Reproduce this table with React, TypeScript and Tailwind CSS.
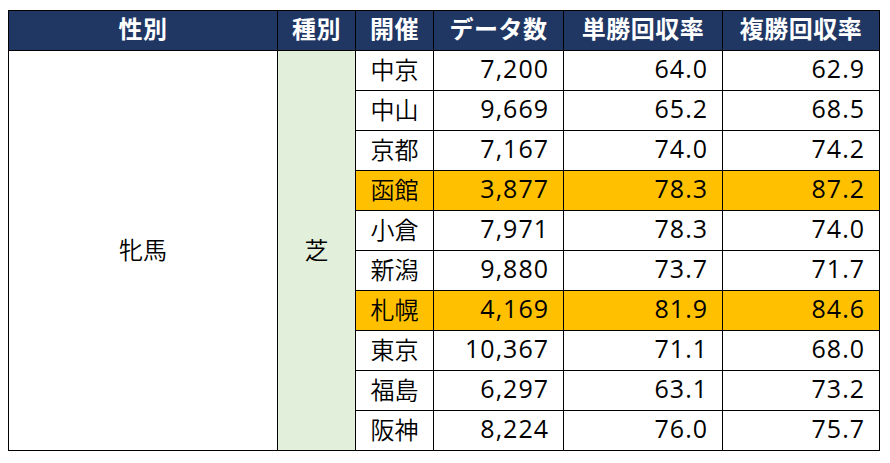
import React from "react";

const rows: { v: string; n: string; t: string; f: string; hl?: boolean }[] = [
  { v: "中京", n: "7,200", t: "64.0", f: "62.9" },
  { v: "中山", n: "9,669", t: "65.2", f: "68.5" },
  { v: "京都", n: "7,167", t: "74.0", f: "74.2" },
  { v: "函館", n: "3,877", t: "78.3", f: "87.2", hl: true },
  { v: "小倉", n: "7,971", t: "78.3", f: "74.0" },
  { v: "新潟", n: "9,880", t: "73.7", f: "71.7" },
  { v: "札幌", n: "4,169", t: "81.9", f: "84.6", hl: true },
  { v: "東京", n: "10,367", t: "71.1", f: "68.0" },
  { v: "福島", n: "6,297", t: "63.1", f: "73.2" },
  { v: "阪神", n: "8,224", t: "76.0", f: "75.7" },
];

function Num({ children, hl }: { children: React.ReactNode; hl?: boolean }) {
  return (
    <div
      className={
        hl
          ? "flex items-center justify-end bg-[#ffc000] pr-[14px] pb-[3px] text-[25px] tracking-[1px]"
          : "flex items-center justify-end bg-white pr-[14px] pb-[3px] text-[25px] tracking-[1px]"
      }
    >
      {children}
    </div>
  );
}

export default function App() {
  return (
    <div className="h-[463px] w-[890px] bg-white pt-[10px] pl-[8px]">
      <div className="grid w-[872px] grid-cols-[268px_77px_77px_129px_158px_156px] grid-rows-[39px_repeat(10,39px)] gap-px bg-black p-px font-['Open_Sans','Noto_Sans_CJK_JP',sans-serif] text-[24px] font-normal text-black">
        {["性別", "種別", "開催", "データ数", "単勝回収率", "複勝回収率"].map((h) => (
          <div
            key={h}
            className="flex items-center justify-center bg-[#203764] pb-[6px] font-['Noto_Sans_CJK_JP',sans-serif] text-[24px] font-bold tracking-[0.5px] text-white"
          >
            {h}
          </div>
        ))}
        <div className="col-start-1 row-span-10 row-start-2 flex items-center justify-center bg-white pb-[4px] font-['Noto_Sans_CJK_JP',sans-serif] font-[350]">
          牝馬
        </div>
        <div className="col-start-2 row-span-10 row-start-2 flex items-center justify-center bg-[#e2efda] pb-[4px] font-['Noto_Sans_CJK_JP',sans-serif] font-[350]">
          芝
        </div>
        {rows.map((r) => (
          <React.Fragment key={r.v}>
            <div
              className={
                r.hl
                  ? "col-start-3 flex items-center justify-center bg-[#ffc000] pb-[3px] font-['Noto_Sans_CJK_JP',sans-serif] font-[350]"
                  : "col-start-3 flex items-center justify-center bg-white pb-[3px] font-['Noto_Sans_CJK_JP',sans-serif] font-[350]"
              }
            >
              {r.v}
            </div>
            <Num hl={r.hl}>{r.n}</Num>
            <Num hl={r.hl}>{r.t}</Num>
            <Num hl={r.hl}>{r.f}</Num>
          </React.Fragment>
        ))}
      </div>
    </div>
  );
}
